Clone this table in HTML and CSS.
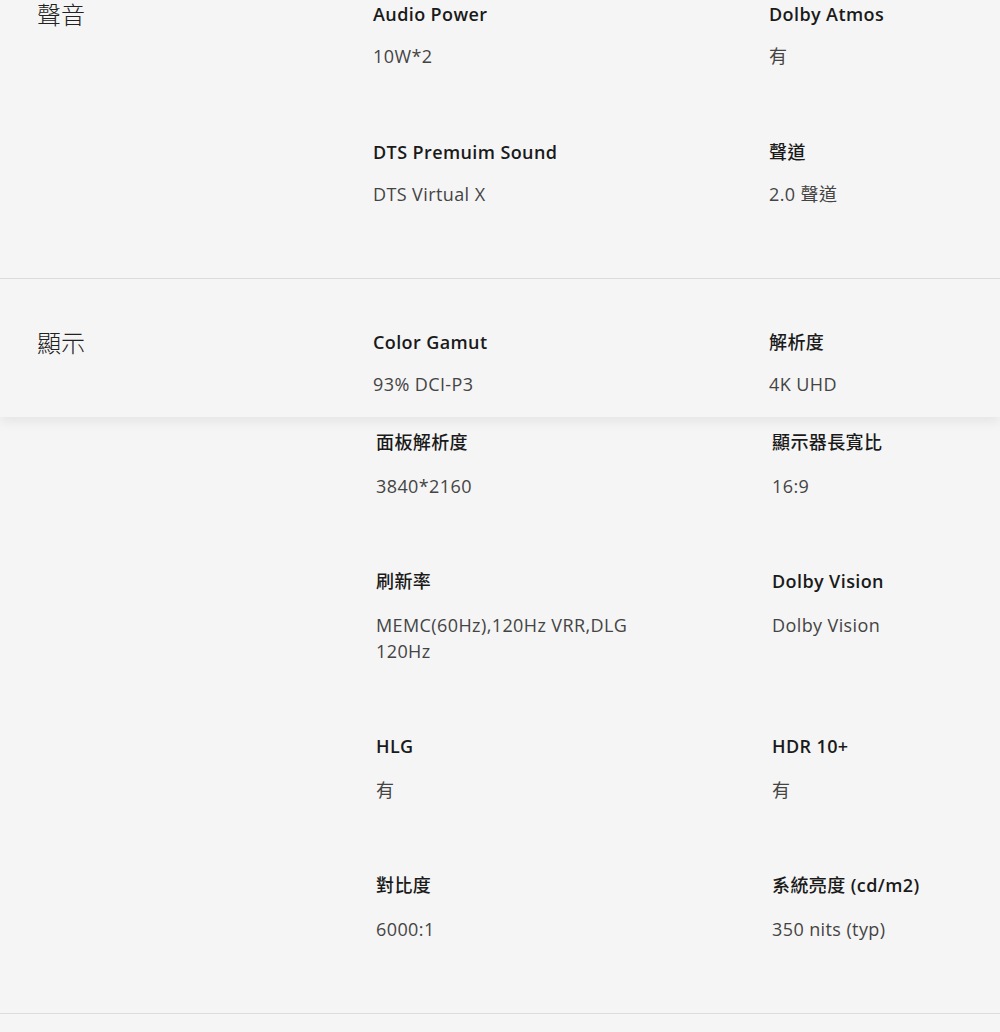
FILE: index.html
```html
<!DOCTYPE html>
<html lang="zh-Hant">
<head>
  <meta charset="UTF-8" />
  <meta name="viewport" content="width=device-width, initial-scale=1.0"/>
  <title>規格</title>
  <link rel="stylesheet" href="styles.css">
</head>
<body>

  <div class="pagina">

    <!-- Secção: áudio -->
    <section class="secao">
      <h3 class="secao-titulo">聲音</h3>
      <div class="specs">
        <div class="item">
          <p class="rotulo">Audio Power</p>
          <p class="valor">10W*2</p>
        </div>
        <div class="item">
          <p class="rotulo">Dolby Atmos</p>
          <p class="valor">有</p>
        </div>
        <div class="item">
          <p class="rotulo">DTS Premuim Sound</p>
          <p class="valor">DTS Virtual X</p>
        </div>
        <div class="item">
          <p class="rotulo cjk">聲道</p>
          <p class="valor">2.0 聲道</p>
        </div>
      </div>
    </section>

    <!-- Secção: ecrã (cabeçalho fixo + resto) -->
    <section class="secao secao-ecra">
      <div class="cabecalho-fixo">
        <h3 class="secao-titulo">顯示</h3>
        <div class="specs">
          <div class="item">
            <p class="rotulo">Color Gamut</p>
            <p class="valor">93% DCI-P3</p>
          </div>
          <div class="item">
            <p class="rotulo cjk">解析度</p>
            <p class="valor">4K UHD</p>
          </div>
        </div>
      </div>

      <div class="specs specs-resto">
        <div class="item">
          <p class="rotulo cjk">面板解析度</p>
          <p class="valor">3840*2160</p>
        </div>
        <div class="item">
          <p class="rotulo cjk">顯示器長寬比</p>
          <p class="valor">16:9</p>
        </div>
        <div class="item">
          <p class="rotulo cjk">刷新率</p>
          <p class="valor">MEMC(60Hz),120Hz VRR,DLG 120Hz</p>
        </div>
        <div class="item">
          <p class="rotulo">Dolby Vision</p>
          <p class="valor">Dolby Vision</p>
        </div>
        <div class="item">
          <p class="rotulo">HLG</p>
          <p class="valor">有</p>
        </div>
        <div class="item">
          <p class="rotulo">HDR 10+</p>
          <p class="valor">有</p>
        </div>
        <div class="item">
          <p class="rotulo cjk">對比度</p>
          <p class="valor">6000:1</p>
        </div>
        <div class="item">
          <p class="rotulo"><span class="cjk">系統亮度</span> (cd/m2)</p>
          <p class="valor">350 nits (typ)</p>
        </div>
      </div>
    </section>

  </div>

</body>
</html>
```

FILE: styles.css
```css
body {
  margin: 0;
  background: #f5f5f5;
  color: #1a1a1a;
  font-family: 'Open Sans', 'Noto Sans CJK TC', sans-serif;
  overflow-x: hidden;
}

p, h3 {
  margin: 0;
}

.pagina {
  margin-top: -58px;
}

.secao {
  display: grid;
  grid-template-columns: 336px 1fr;
  padding: 60px 0 0 37px;
  border-bottom: 1px solid #dcdcdc;
}

.secao-titulo {
  font-size: 24px;
  line-height: 24px;
  font-weight: 300;
  color: #222;
  font-family: 'Noto Sans CJK TC', sans-serif;
}

.specs {
  display: grid;
  grid-template-columns: 396px 1fr;
  align-content: start;
}

.item {
  max-width: 290px;
  padding-bottom: 71px;
}

.rotulo {
  font-size: 18px;
  line-height: 24px;
  font-weight: 600;
  letter-spacing: 0.4px;
  color: #1a1a1a;
}

.cjk {
  font-weight: 500;
}

.valor {
  margin-top: 17px;
  font-size: 18px;
  line-height: 26px;
  font-weight: 400;
  letter-spacing: 0.4px;
  color: #444;
}

.secao-ecra {
  display: block;
  padding: 0 0 1px 0;
}

.cabecalho-fixo {
  display: grid;
  grid-template-columns: 336px 1fr;
  padding: 51px 0 0 37px;
  height: 87px;
  background: #f5f5f5;
  box-shadow: 0 6px 10px rgba(0, 0, 0, 0.06);
  position: relative;
}

.cabecalho-fixo .item {
  padding-bottom: 0;
}

.specs-resto {
  margin: 13px 0 0 376px;
}

.specs-resto .valor {
  margin-top: 19px;
}

.specs-resto .item {
  padding-bottom: 70px;
}
```
